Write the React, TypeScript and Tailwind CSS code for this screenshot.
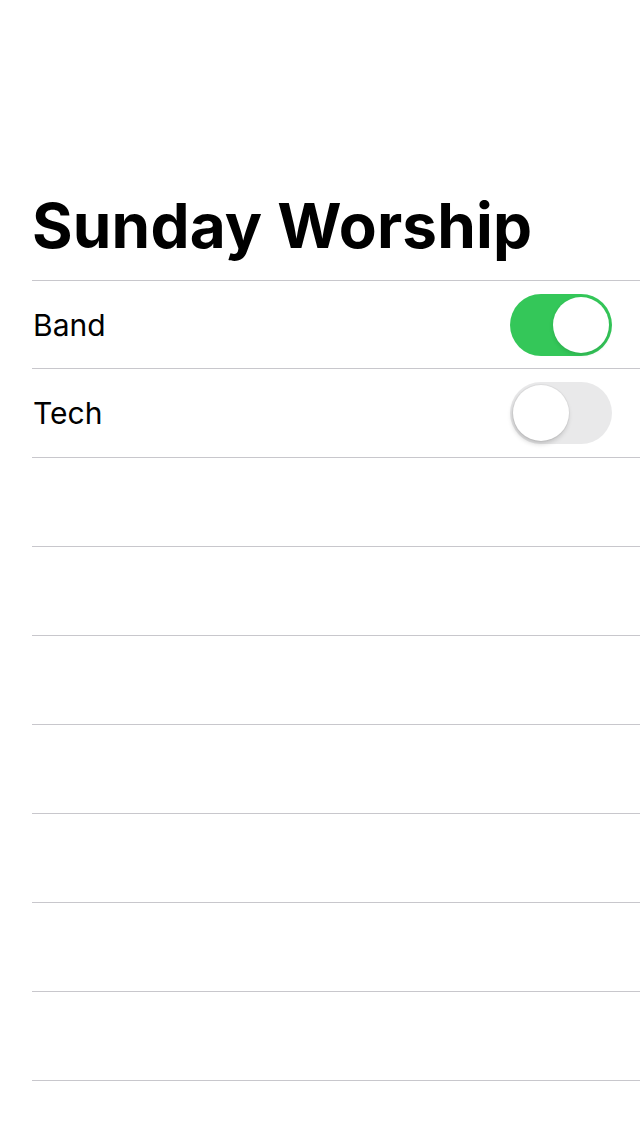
import React, { useState } from 'react';

type Row = { label: string; on: boolean };

const Toggle: React.FC<{ on: boolean; onChange: () => void }> = ({ on, onChange }) => (
  <button
    onClick={onChange}
    className={`relative w-[102px] h-[62px] rounded-full shrink-0 transition-colors ${on ? 'bg-[#34c759]' : 'bg-[#e9e9ea]'}`}
  >
    <span
      className={`absolute top-[3px] w-[56px] h-[56px] rounded-full bg-white transition-all ${on
        ? 'left-[43px] shadow-[0_2px_4px_rgba(0,0,0,0.12)]'
        : 'left-[3px] shadow-[-1px_3px_5px_rgba(0,0,0,0.18),0_0_0_1px_rgba(0,0,0,0.04)]'
        }`}
    />
  </button>
);

export default function App() {
  const [rows, setRows] = useState<Row[]>([
    { label: 'Band', on: true },
    { label: 'Tech', on: false },
  ]);

  const toggle = (i: number) =>
    setRows(rows.map((r, idx) => (idx === i ? { ...r, on: !r.on } : r)));

  // empty cells fill the rest of the table
  const empties = Array.from({ length: 7 });

  return (
    <div className="w-[640px] h-[1136px] bg-white overflow-hidden text-black font-['Inter','Liberation_Sans',sans-serif]">
      <div className="pt-[195px] pl-[32px]">
        <h1 className="text-[62px] leading-none font-bold tracking-[0.2px]">Sunday Worship</h1>

        <div className="mt-[23px] border-t border-[#c8c7cc]">
          {rows.map((r, i) => (
            <div
              key={r.label}
              className={`flex items-center justify-between pr-[28px] border-b border-[#c8c7cc] ${i === 0 ? 'h-[88px]' : 'h-[89px]'}`}
            >
              <span className="text-[30px] leading-none pl-[1px]">{r.label}</span>
              <Toggle on={r.on} onChange={() => toggle(i)} />
            </div>
          ))}
          {empties.map((_, i) => (
            <div key={i} className="h-[89px] border-b border-[#c8c7cc]" />
          ))}
        </div>
      </div>
    </div>
  );
}
